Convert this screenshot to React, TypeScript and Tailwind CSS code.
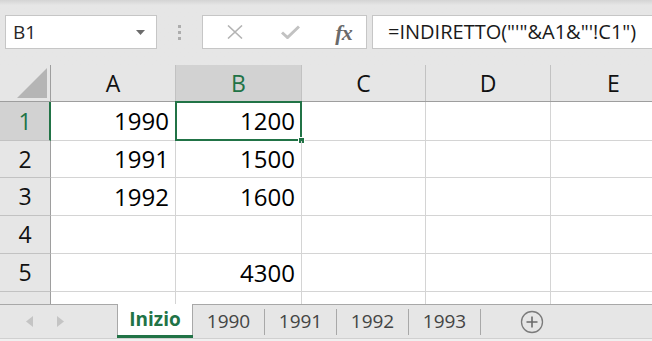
import React from "react";

const cols = [
  { key: "A", w: "w-[125px]" },
  { key: "B", w: "w-[126px]" },
  { key: "C", w: "w-[124px]" },
  { key: "D", w: "w-[125px]" },
  { key: "E", w: "w-[126px]" },
];

const rows: Record<string, string>[] = [
  { A: "1990", B: "1200" },
  { A: "1991", B: "1500" },
  { A: "1992", B: "1600" },
  {},
  { B: "4300" },
];

const sheets = ["1990", "1991", "1992", "1993"];

function FormulaBar() {
  return (
    <div className="h-[65px] shrink-0 bg-gradient-to-b from-[#d4d4d4] via-[#e6e6e6] via-[8%] to-[#e6e6e6] flex items-start pt-[15px] pl-[5px] gap-0">
      {/* name box */}
      <div className="w-[152px] h-[34px] bg-white border border-[#c6c6c6] flex items-center justify-between pl-[7px] pr-[11px]">
        <span className="text-[19px] text-[#262626]">B1</span>
        <svg width="9" height="5" viewBox="0 0 9 5">
          <path d="M0 0h9L4.5 5z" fill="#6b6b6b" />
        </svg>
      </div>
      {/* grip dots */}
      <div className="w-[45px] h-[34px] flex flex-col items-center justify-center gap-[3px]">
        <span className="w-[3px] h-[3px] bg-[#adadad]" />
        <span className="w-[3px] h-[3px] bg-[#adadad]" />
        <span className="w-[3px] h-[3px] bg-[#adadad]" />
      </div>
      {/* cancel / enter / fx */}
      <div className="w-[165px] h-[34px] bg-white border border-[#c6c6c6] flex items-center">
        <div className="w-[54px] flex justify-center pl-[10px]">
          <svg width="16" height="14" viewBox="0 0 16 14">
            <path d="M1 0.5l14 13M15 0.5l-14 13" stroke="#b4b4b4" strokeWidth="1.6" fill="none" />
          </svg>
        </div>
        <div className="w-[54px] flex justify-center pl-[12px]">
          <svg width="19" height="14" viewBox="0 0 19 14">
            <path d="M1 7.5l5.5 5L18 1.5" stroke="#c2c2c2" strokeWidth="3" fill="none" />
          </svg>
        </div>
        <div className="flex-1 flex justify-center pl-[10px]">
          <span className="text-[22px] italic font-bold text-[#6a6a6a] font-['Liberation_Serif',serif] tracking-[-1px]">
            fx
          </span>
        </div>
      </div>
      <div className="w-[5px]" />
      {/* formula */}
      <div className="flex-1 h-[34px] bg-white border border-[#c6c6c6] border-r-0 flex items-center pl-[15px]">
        <span className="text-[20px] text-[#1a1a1a] whitespace-nowrap">
          =INDIRETTO("'"&amp;A1&amp;"'!C1")
        </span>
      </div>
    </div>
  );
}

function HeaderRow() {
  return (
    <div className="flex h-[37px] shrink-0 bg-[#e6e6e6] border-b border-[#9e9e9e]">
      <div className="w-[51px] shrink-0 border-r border-[#9e9e9e] flex items-end justify-end pr-[3px] pb-[3px]">
        <svg width="30" height="30" viewBox="0 0 30 30">
          <path d="M30 0V30H0z" fill="#b5b5b5" />
        </svg>
      </div>
      {cols.map((c) => {
        const sel = c.key === "B";
        return (
          <div
            key={c.key}
            className={`${c.w} shrink-0 border-r border-[#c2c2c2] flex items-center justify-center text-[23px] ${
              sel ? "bg-[#d2d2d2] text-[#217346]" : "text-[#111]"
            }`}
          >
            {c.key}
          </div>
        );
      })}
    </div>
  );
}

function DataRow({ n, data, h }: { n?: number; data: Record<string, string>; h: string }) {
  const sel = n === 1;
  return (
    <div className={`flex ${h} shrink-0 border-b border-[#d4d4d4]`}>
      <div
        className={`w-[51px] shrink-0 flex items-center justify-center text-[23px] border-b border-[#c2c2c2] -mb-px ${
          sel
            ? "bg-[#d2d2d2] text-[#217346] border-r-2 border-r-[#217346] pl-px"
            : "bg-[#e6e6e6] text-[#111] border-r border-r-[#9e9e9e]"
        }`}
      >
        {n}
      </div>
      {cols.map((c) => (
        <div
          key={c.key}
          className={`${c.w} shrink-0 relative border-r border-[#d4d4d4] flex items-center justify-end pr-[6px] text-[24px] text-black`}
        >
          {data[c.key]}
          {sel && c.key === "B" && (
            <div className="absolute -left-px -top-px -right-px -bottom-px border-2 border-[#217346] pointer-events-none">
              <div className="absolute -right-[5px] -bottom-[5px] w-[7px] h-[7px] bg-[#217346] border border-white" />
            </div>
          )}
        </div>
      ))}
    </div>
  );
}

function TabBar() {
  return (
    <div className="h-[37px] shrink-0 bg-[#e6e6e6] border-t border-[#a8a8a8] flex flex-col">
      <div className="h-[33px] flex items-stretch">
        <div className="w-[117px] flex items-center pl-[26px] gap-[24px]">
          <svg width="7" height="11" viewBox="0 0 7 11">
            <path d="M7 0V11L0 5.5z" fill="#c4c4c4" />
          </svg>
          <svg width="7" height="11" viewBox="0 0 7 11">
            <path d="M0 0V11L7 5.5z" fill="#c4c4c4" />
          </svg>
        </div>
        <div className="w-[76px] -mt-px bg-white border-x border-[#a8a8a8] flex flex-col">
          <div className="flex-1 flex items-center justify-center text-[19px] font-bold text-[#217346]">
            Inizio
          </div>
          <div className="h-[3px] bg-[#217346] -mx-px" />
        </div>
        {sheets.map((s) => (
          <div key={s} className="w-[72px] flex items-center">
            <div className="flex-1 flex justify-center text-[19px] text-[#444]">{s}</div>
            <div className="w-px h-[26px] bg-[#a8a8a8]" />
          </div>
        ))}
        <div className="w-[102px] flex items-center justify-center">
          <svg width="24" height="24" viewBox="0 0 24 24">
            <circle cx="12" cy="12" r="10.5" stroke="#7b7b7b" strokeWidth="1.3" fill="none" />
            <path d="M12 6.5v11M6.5 12h11" stroke="#6b6b6b" strokeWidth="1.6" />
          </svg>
        </div>
      </div>
      <div className="flex-1 bg-[#f0f0f0] border-t border-[#d0d0d0]" />
    </div>
  );
}

export default function App() {
  return (
    <div className="w-[652px] h-[341px] overflow-hidden bg-white flex flex-col font-['Open_Sans','Noto_Sans',sans-serif]">
      <FormulaBar />
      <HeaderRow />
      <DataRow n={1} data={rows[0]} h="h-[39px]" />
      <DataRow n={2} data={rows[1]} h="h-[37px]" />
      <DataRow n={3} data={rows[2]} h="h-[38px]" />
      <DataRow n={4} data={rows[3]} h="h-[38px]" />
      <DataRow n={5} data={rows[4]} h="h-[38px]" />
      <div className="flex-1 flex">
        <div className="w-[51px] shrink-0 bg-[#e6e6e6] border-r border-[#9e9e9e]" />
        {cols.map((c) => (
          <div key={c.key} className={`${c.w} shrink-0 border-r border-[#d4d4d4]`} />
        ))}
      </div>
      <TabBar />
    </div>
  );
}
